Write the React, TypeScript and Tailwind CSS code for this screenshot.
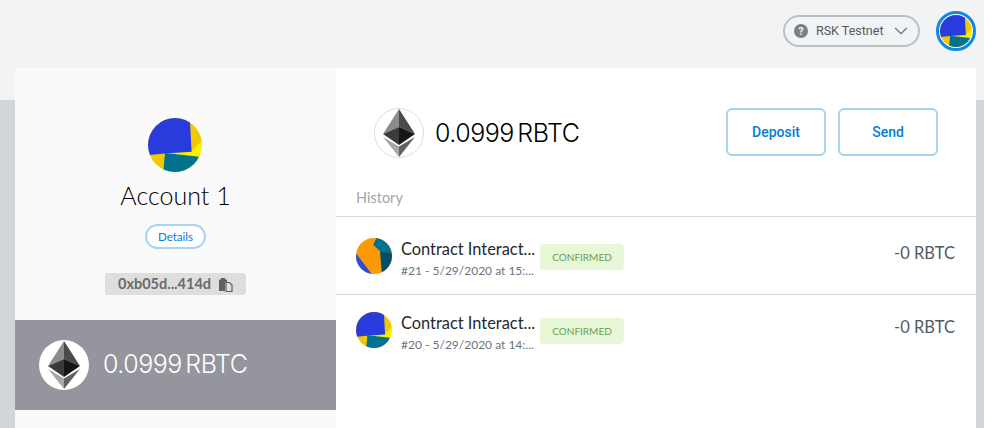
import React from 'react';
import { ChevronDown } from 'lucide-react';

function AccountIdenticon({ size }: { size: number }) {
    return (
        <svg width={size} height={size} viewBox="0 0 54 54" className="block shrink-0 rounded-full">
            <rect width="54" height="54" fill="#f7ee00" />
            <polygon points="42,2 56,20 54,22 44,33" fill="#f2c800" />
            <polygon points="1,37 17,34.5 15,54 0,54" fill="#f2c800" />
            <polygon points="17,35 51,38.7 42,56 15,56" fill="#01738f" />
            <polygon points="-2,-2 41,-2 42,2.7 43.7,33.7 17,35.5 1.3,37 -2,37" fill="#2a3bdd" />
        </svg>
    );
}

function OrangeIdenticon() {
    return (
        <svg width="36" height="36" viewBox="0 0 36 36" className="block shrink-0 rounded-full">
            <rect width="36" height="36" fill="#fb9a02" />
            <polygon points="17.3,7 20.7,-1 37,-1 37,15.3 24,13" fill="#01738f" />
            <polygon points="24,13 37,15.3 37,37 26,37" fill="#034f68" />
            <polygon points="-1,14 15.7,36 15.7,37 -1,37" fill="#2a4fdd" />
        </svg>
    );
}

function EthLogo({ className }: { className: string }) {
    return (
        <svg viewBox="0 0 50 50" className={className}>
            <polygon points="25,1 25,19 9,26" fill="#8c8c8c" />
            <polygon points="25,1 41,26 25,19" fill="#4a4a4a" />
            <polygon points="9,26 25,19 25,37" fill="#3a3a3a" />
            <polygon points="41,26 25,19 25,37" fill="#161616" />
            <polygon points="9,29 25,38.5 25,49" fill="#a8a8a8" />
            <polygon points="41,29 25,38.5 25,49" fill="#626262" />
        </svg>
    );
}

function HistoryRow({ icon, nonce, time, rowClass }: { icon: React.ReactNode; nonce: string; time: string; rowClass: string }) {
    return (
        <div className={`flex items-start pl-5 pr-[21px] ${rowClass}`}>
            {icon}
            <div className="ml-[9px] w-[139px] whitespace-nowrap font-['Lato',sans-serif]">
                <div className="mt-px text-[16.4px] leading-5 text-[#24292e]">Contract Interact...</div>
                <div className="mt-[4px] text-[12px] leading-4 text-[#6a737d]">{nonce} - 5/29/2020 at {time}</div>
            </div>
            <div className="mt-[6px] flex h-[26px] w-[84px] items-center justify-center rounded bg-[#e9f7d9] font-['Lato',sans-serif] text-[10px] text-[#6a9d4f]">
                CONFIRMED
            </div>
            <div className="ml-auto mt-[5px] font-['Lato',sans-serif] text-[16.5px] leading-5 text-[#535a61]">-0 RBTC</div>
        </div>
    );
}

export default function App() {
    return (
        <div className="h-[428px] w-[984px] overflow-hidden bg-[#d2d6d9]">
            {/* Header Area */}
            <div className="flex h-[100px] items-start justify-end bg-[#f2f3f5] pr-2 pt-[11px]">
                <div className="mt-1 flex h-8 w-[137px] items-center rounded-full border-2 border-[#bbc0c5] pl-[9px] font-['Roboto',sans-serif] text-[12.5px] text-[#535a61]">
                    <svg width="14" height="14" viewBox="0 0 14 14" className="shrink-0">
                        <circle cx="7" cy="7" r="7" fill="#7a7f85" />
                        <text x="7" y="10.8" textAnchor="middle" fontSize="11" fontWeight="700" fill="#f2f3f5" fontFamily="Roboto, sans-serif">?</text>
                    </svg>
                    <span className="ml-2">RSK Testnet</span>
                    <ChevronDown className="ml-[7px] h-[22px] w-[22px] text-[#6a737d]" strokeWidth={1.25} />
                </div>
                <div className="ml-4 flex h-10 w-10 items-center justify-center rounded-full border-[3px] border-[#0e8ae4] bg-white">
                    <AccountIdenticon size={32} />
                </div>
            </div>

            {/* Wallet Card */}
            <div className="-mt-8 ml-[15px] flex h-[360px] w-[961px] bg-white">
                <div className="flex w-[321px] shrink-0 flex-col items-center bg-[#fafafa]">
                    <div className="mt-[50px] -ml-px">
                        <AccountIdenticon size={54} />
                    </div>
                    <div className="mt-[7px] font-['Lato',sans-serif] text-[25px] font-light leading-8 text-black">Account 1</div>
                    <div className="mt-[13px] flex h-[25px] w-[61px] items-center justify-center rounded-full border-2 border-[#a8d4f3] bg-white font-['Lato',sans-serif] text-[11.5px] text-[#037dd6]">
                        Details
                    </div>
                    <div className="mt-6 flex h-[22px] w-[141px] items-center justify-center gap-[7px] rounded-[3px] bg-[#dedede] font-['Lato',sans-serif] text-[14.5px] font-bold text-[#6a6a6a]">
                        <span>0xb05d...414d</span>
                        <svg width="15" height="15" viewBox="0 0 15 15">
                            <path d="M1 2.5h2V1h4v1.5h2V5H7v9H1z" fill="#5f5f5f" />
                            <path d="M8 5.5h3.5L14 8v6.5H8z" fill="#dedede" stroke="#5f5f5f" strokeWidth="1.2" />
                        </svg>
                    </div>
                    <div className="mt-[25px] flex h-[90px] w-full items-center bg-[#95959d] pl-6">
                        <div className="flex h-[50px] w-[50px] items-center justify-center rounded-full bg-white">
                            <EthLogo className="h-[50px] w-[50px]" />
                        </div>
                        <div className="ml-[14px] font-['Inter',sans-serif] text-[25px] font-light tracking-[-0.5px] [word-spacing:-3px] text-white">0.0999 RBTC</div>
                    </div>
                </div>

                <div className="min-w-0 flex-1">
                    <div className="flex h-[122px] items-start pl-[38px] pr-[38px] pt-10">
                        <div className="flex h-[50px] w-[50px] shrink-0 items-center justify-center rounded-full border border-[#dedede]">
                            <EthLogo className="h-[50px] w-[50px] shrink-0" />
                        </div>
                        <div className="ml-[11px] mt-[7px] font-['Inter',sans-serif] text-[25px] font-light leading-9 tracking-[-0.5px] [word-spacing:-3px] text-black">0.0999 RBTC</div>
                        <div className="ml-auto flex gap-3 font-['Roboto',sans-serif] text-[14px] font-medium text-[#037dd6]">
                            <div className="flex h-12 w-[100px] items-center justify-center rounded-md border-2 border-[#a8d4f3]">Deposit</div>
                            <div className="flex h-12 w-[100px] items-center justify-center rounded-md border-2 border-[#a8d4f3]">Send</div>
                        </div>
                    </div>
                    <div className="h-[27px] border-b border-[#d6d9dc] pl-5 font-['Lato',sans-serif] text-[14.5px] leading-[16px] text-[#9fa6ae]">History</div>
                    <HistoryRow icon={<OrangeIdenticon />} nonce="#21" time="15:..." rowClass="h-[78px] border-b border-[#d6d9dc] pt-[21px]" />
                    <HistoryRow icon={<AccountIdenticon size={36} />} nonce="#20" time="14:..." rowClass="h-[78px] pt-[17px]" />
                </div>
            </div>
        </div>
    );
}
